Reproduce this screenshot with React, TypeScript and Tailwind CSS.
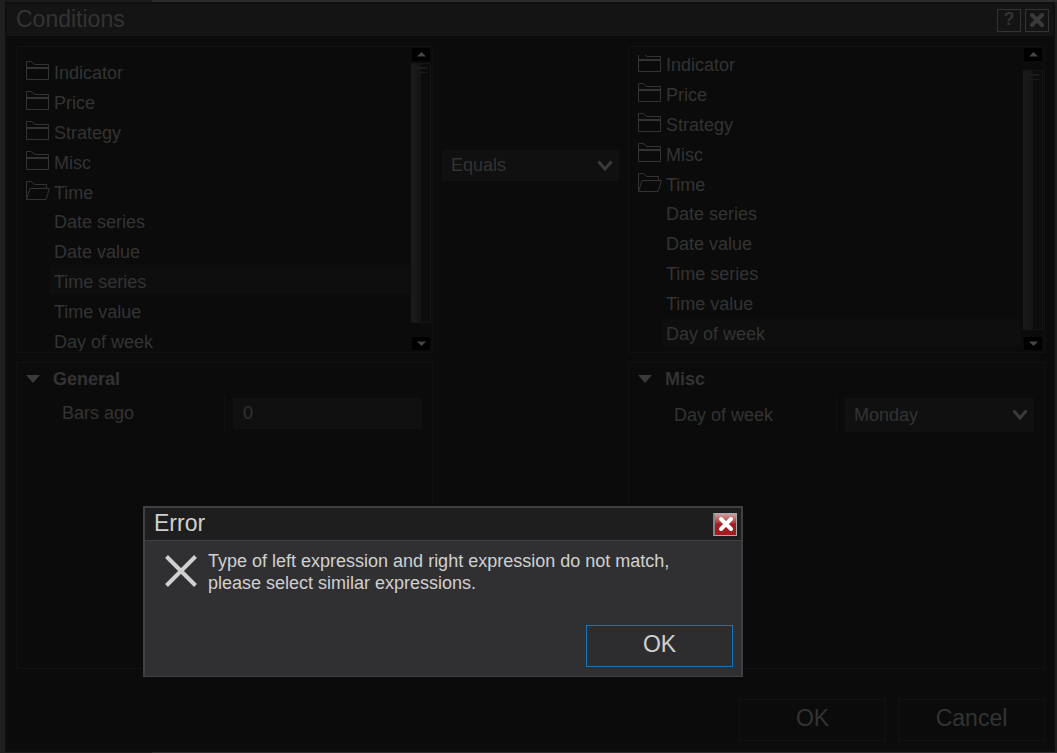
import { useState } from "react";
import type { ReactNode } from "react";

const folders = ["Indicator", "Price", "Strategy", "Misc"];
const timeItems = ["Date series", "Date value", "Time series", "Time value", "Day of week"];

function FolderIcon({ open }: { open?: boolean }) {
  return (
    <svg width="24" height="20" viewBox="0 0 24 20" fill="none" stroke="#333333" className="shrink-0">
      {open ? (
        <>
          <path d="M0.5 19V0.5H5L9 3.5H20.5V7" />
          <path d="M0.5 18.5L4 7.5H23.5L20 18.5Z" />
        </>
      ) : (
        <>
          <path d="M0.5 0.5H5L9 3.5H22.5V18.5H0.5Z" />
          <path d="M0.5 7H22" strokeWidth="2" />
        </>
      )}
    </svg>
  );
}

function Folder({ name, open }: { name: string; open?: boolean }) {
  return (
    <div className="flex h-[30px] items-center gap-1 pb-0.5 pl-[9px]">
      <FolderIcon open={open} />
      <span className="pt-1 leading-5">{name}</span>
    </div>
  );
}

function Cross({ color }: { color: string }) {
  return (
    <svg width="16" height="16" viewBox="0 0 16 16" stroke={color} strokeWidth="4" strokeLinecap="round">
      <path d="M3 3L13 13M13 3L3 13" />
    </svg>
  );
}

function ScrollButton({ down }: { down?: boolean }) {
  return (
    <button
      aria-label={down ? "Scroll down" : "Scroll up"}
      className="flex h-[13px] w-[18px] items-center justify-center bg-black"
    >
      <svg width="9" height="5" viewBox="0 0 9 5" fill="#464646">
        <path d={down ? "M0 0.5H9L4.5 5Z" : "M0 4.5H9L4.5 0Z"} />
      </svg>
    </button>
  );
}

function Tree({ selected, scrolled }: { selected: string; scrolled?: boolean }) {
  return (
    <div className="flex h-[307px] border border-[#111111] pr-px">
      <div className="mt-2 mb-px min-w-0 flex-1 overflow-hidden">
        <ul className={scrolled ? "-mt-1.5" : "mt-0.5"}>
          {folders.map((name) => (
            <li key={name}>
              <Folder name={name} />
            </li>
          ))}
          <li>
            <Folder name="Time" open />
            <ul className="pr-0.5 pl-[33px]">
              {timeItems.map((name) => (
                <li key={name} className="h-[30px] leading-[30px]">
                  <div className={name === selected ? "h-[27px] bg-[#0e0e0e] pl-1" : "h-[27px] pl-1"}>{name}</div>
                </li>
              ))}
            </ul>
          </li>
        </ul>
      </div>
      <div className="flex w-5 flex-col items-center pt-px pb-0.5">
        <ScrollButton />
        <div className={scrolled ? "w-full flex-1 pt-[9px]" : "w-full flex-1 pt-0.5"}>
          <div className="flex h-[260px] flex-col gap-[3px] border-t border-r border-b border-[#161616] bg-linear-to-r from-[#1a1a1a] from-10% via-[#141414] via-50% to-[#0c0c0c] to-55% pt-[3px] pl-1">
            <span className="h-0.5 w-3 bg-[#1a1a1a]" />
            <span className="h-px w-3 bg-[#1a1a1a]" />
          </div>
        </div>
        <ScrollButton down />
      </div>
    </div>
  );
}

type DropdownProps = {
  label: string;
  id: string;
  options: string[];
  className: string;
};

function Dropdown({ label, id, options, className }: DropdownProps) {
  return (
    <div className={`relative ${className}`}>
      <select
        id={id}
        aria-label={label}
        className="h-full w-full appearance-none bg-[#101010] pr-8 pl-[9px] text-[18px] outline-none"
      >
        {options.map((option) => (
          <option key={option}>{option}</option>
        ))}
      </select>
      <svg
        width="16"
        height="12"
        viewBox="0 0 16 12"
        fill="none"
        stroke="#3a3a3a"
        strokeWidth="3"
        className="pointer-events-none absolute inset-y-0 right-1.5 my-auto"
      >
        <path d="M1.5 1.5L8 9L14.5 1.5" />
      </svg>
    </div>
  );
}

type PropertiesProps = {
  title: string;
  label: string;
  id: string;
  children: ReactNode;
};

function Properties({ title, label, id, children }: PropertiesProps) {
  return (
    <section className="mt-[9px] min-h-[307px] flex-1 border border-[#111111] px-[9px]">
      <h2 className="flex h-8 items-center gap-[13px] font-bold">
        <svg width="14" height="8" viewBox="0 0 14 8" fill="#3a3a3a">
          <path d="M0 0H14L7 8Z" />
        </svg>
        {title}
      </h2>
      <div className="flex pr-px pl-9">
        <label htmlFor={id} className="flex flex-1 items-center border-r border-[#111111]">
          {label}
        </label>
        <div className="ml-2 w-[189px] py-[3px]">{children}</div>
      </div>
    </section>
  );
}

function ErrorDialog({ onClose }: { onClose: () => void }) {
  return (
    <div
      role="alertdialog"
      aria-labelledby="error-title"
      className="absolute top-[506px] left-[143px] w-[600px] border-2 border-b border-[#3f3f44] bg-[#303032] text-[#d0d0d0]"
    >
      <div className="flex h-[33px] items-center justify-between border-b border-[#3f3f44] bg-[#1e1e1e] pr-1 pl-[9px]">
        <h2 id="error-title" className="pb-0.5 text-[23px] leading-7">
          Error
        </h2>
        <button
          aria-label="Close"
          onClick={onClose}
          className="flex h-[23px] w-6 items-center justify-center border border-l-2 border-[#a9a9a9] border-l-[#858585] bg-linear-to-b from-[#cf9ea0] to-[#a31c20] to-50%"
        >
          <Cross color="#ffffff" />
        </button>
      </div>
      <div className="flex gap-[11px] px-5 pt-[9px]">
        <div className="pt-[5px]">
          <svg width="32" height="32" viewBox="0 0 32 32" stroke="#d0d0d0" strokeWidth="4">
            <path d="M1.5 1.5L30.5 30.5M30.5 1.5L1.5 30.5" />
          </svg>
        </div>
        <p className="leading-[22px]">
          Type of left expression and right expression do not match,
          <br />
          please select similar expressions.
        </p>
      </div>
      <div className="flex justify-end pt-[31px] pr-2 pb-[9px]">
        <button
          onClick={onClose}
          className="h-[42px] w-[147px] border border-[#0e76c4] bg-[#2d2d30] pb-[3px] text-[23px]"
        >
          OK
        </button>
      </div>
    </div>
  );
}

export default function App() {
  const [showError, setShowError] = useState(true);

  return (
    <div className="relative flex min-h-screen flex-col bg-[#1f1f1f] pr-0.5 pl-[5px] font-['Liberation_Sans',Arial,sans-serif] text-[18px] leading-[27px] text-[#333333]">
      {/* sliver of the application behind the window */}
      <div className="-mr-0.5 h-0.5 bg-linear-to-r from-[#1b1b1b] from-14% to-[#2d2d30] to-14%" />
      <div className="flex flex-1 flex-col border-2 border-[#0f0f10] bg-[#0b0b0b]">
        <header className="flex h-8 items-center justify-between bg-[#141414] pr-1 pl-[9px]">
          <h1 className="pb-0.5 text-[23px] leading-7">Conditions</h1>
          <div className="flex gap-1">
            <button
              aria-label="Help"
              className="flex h-[23px] w-6 items-center justify-center border border-[#333333] pb-0.5 font-bold"
            >
              ?
            </button>
            <button
              aria-label="Close window"
              className="flex h-[23px] w-6 items-center justify-center border border-[#333333]"
            >
              <Cross color="#3a3a3a" />
            </button>
          </div>
        </header>

        <main className="grid flex-1 grid-cols-[1fr_177px_1fr] gap-[9px] pt-2.5 pr-2 pl-[9px]">
          <div className="flex flex-col">
            <Tree selected="Time series" />
            <Properties title="General" label="Bars ago" id="bars-ago">
              <input
                id="bars-ago"
                defaultValue="0"
                className="block h-[31px] w-full bg-[#101010] px-2.5 outline-none"
              />
            </Properties>
          </div>
          <Dropdown
            id="operator"
            label="Comparison"
            options={["Equals"]}
            className="mt-[104px] h-[31px]"
          />
          <div className="flex flex-col">
            <Tree selected="Day of week" scrolled />
            <Properties title="Misc" label="Day of week" id="day-of-week">
              <Dropdown id="day-of-week" label="Day of week" options={["Monday"]} className="h-[34px]" />
            </Properties>
          </div>
        </main>

        <footer className="flex justify-end gap-3 pt-[30px] pr-2 pb-[9px] text-[23px]">
          <button className="h-[42px] w-[147px] border border-[#111111] pb-[3px]">OK</button>
          <button className="h-[42px] w-[147px] border border-[#111111] pb-[3px]">Cancel</button>
        </footer>
      </div>
      <div className="-mr-0.5 h-px bg-linear-to-r from-[#1b1b1b] from-14% to-[#2d2d30] to-14%" />

      {showError && <ErrorDialog onClose={() => setShowError(false)} />}
    </div>
  );
}
